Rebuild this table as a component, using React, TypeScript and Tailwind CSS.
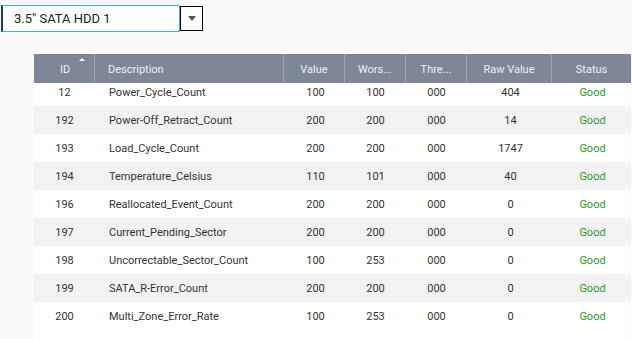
import React from "react";

const rows = [
  { id: "12", desc: "Power_Cycle_Count", value: "100", worst: "100", thresh: "000", raw: "404" },
  { id: "192", desc: "Power-Off_Retract_Count", value: "200", worst: "200", thresh: "000", raw: "14" },
  { id: "193", desc: "Load_Cycle_Count", value: "200", worst: "200", thresh: "000", raw: "1747" },
  { id: "194", desc: "Temperature_Celsius", value: "110", worst: "101", thresh: "000", raw: "40" },
  { id: "196", desc: "Reallocated_Event_Count", value: "200", worst: "200", thresh: "000", raw: "0" },
  { id: "197", desc: "Current_Pending_Sector", value: "200", worst: "200", thresh: "000", raw: "0" },
  { id: "198", desc: "Uncorrectable_Sector_Count", value: "100", worst: "253", thresh: "000", raw: "0" },
  { id: "199", desc: "SATA_R-Error_Count", value: "200", worst: "200", thresh: "000", raw: "0" },
  { id: "200", desc: "Multi_Zone_Error_Rate", value: "100", worst: "253", thresh: "000", raw: "0" },
];

const cols = "grid grid-cols-[61px_189px_61px_61px_61px_85px_79px]";

const App = () => {
  return (
    <div className="min-h-screen bg-[#fafafa] pt-[5px] text-[11px] text-[#333]" style={{ fontFamily: "Roboto, 'Liberation Sans', sans-serif" }}>
      {/* disk selector */}
      <div className="flex pl-[1px]">
        <div className="flex h-[27px] w-[179px] items-center border border-l-2 border-[#3bb6c6] border-l-[#1f3f46] bg-white pl-[11px] text-[13px] text-[#222]">
          3.5" SATA HDD 1
        </div>
        <div className="mt-[1px] flex h-[25px] w-[23px] items-center justify-center border border-black bg-white">
          <div className="h-0 w-0 border-x-[4px] border-t-[5px] border-x-transparent border-t-[#555]" />
        </div>
      </div>

      {/* table */}
      <div className="ml-[34px] mt-[22px] w-[597px]">
        <div className={`${cols} h-[29px] bg-[#7f8698] text-[#eef0f4]`}>
          <div className="relative flex items-center justify-center border-r border-[#a0a6b3] pl-[2px] pt-[3px]">
            ID
            <div className="absolute left-[45px] top-[4px] h-0 w-0 border-x-[3px] border-b-[3px] border-x-transparent border-b-white" />
          </div>
          <div className="flex items-center border-r border-[#a0a6b3] pl-[13px] pt-[3px]">Description</div>
          <div className="flex items-center justify-center border-r border-[#a0a6b3] pt-[3px]">Value</div>
          <div className="flex items-center justify-center border-r border-[#a0a6b3] pt-[3px]">Wors...</div>
          <div className="flex items-center justify-center border-r border-[#a0a6b3] pt-[3px]">Thre...</div>
          <div className="flex items-center justify-center border-r border-[#a0a6b3] pt-[3px]">Raw Value</div>
          <div className="flex items-center justify-center pt-[3px]">Status</div>
        </div>

        <div className="bg-white">
          {rows.map((r, i) => (
            <div
              key={r.id}
              className={`${cols} ${i === 0 ? "h-[23px] items-start pt-[2px]" : "h-[28px] items-center pt-[2px]"} ${i % 2 === 1 ? "bg-[#f2f2f2]" : "bg-white"}`}
            >
              <div className="text-center">{r.id}</div>
              <div className="pl-[14px]">{r.desc}</div>
              <div className="pl-[2px] text-center">{r.value}</div>
              <div className="text-center">{r.worst}</div>
              <div className="text-center">{r.thresh}</div>
              <div className="pl-[2px] text-center">{r.raw}</div>
              <div className="pl-[2px] text-center text-[#24a024]">Good</div>
            </div>
          ))}
          <div className="h-[20px]" />
        </div>
      </div>
    </div>
  );
};

export default App;
